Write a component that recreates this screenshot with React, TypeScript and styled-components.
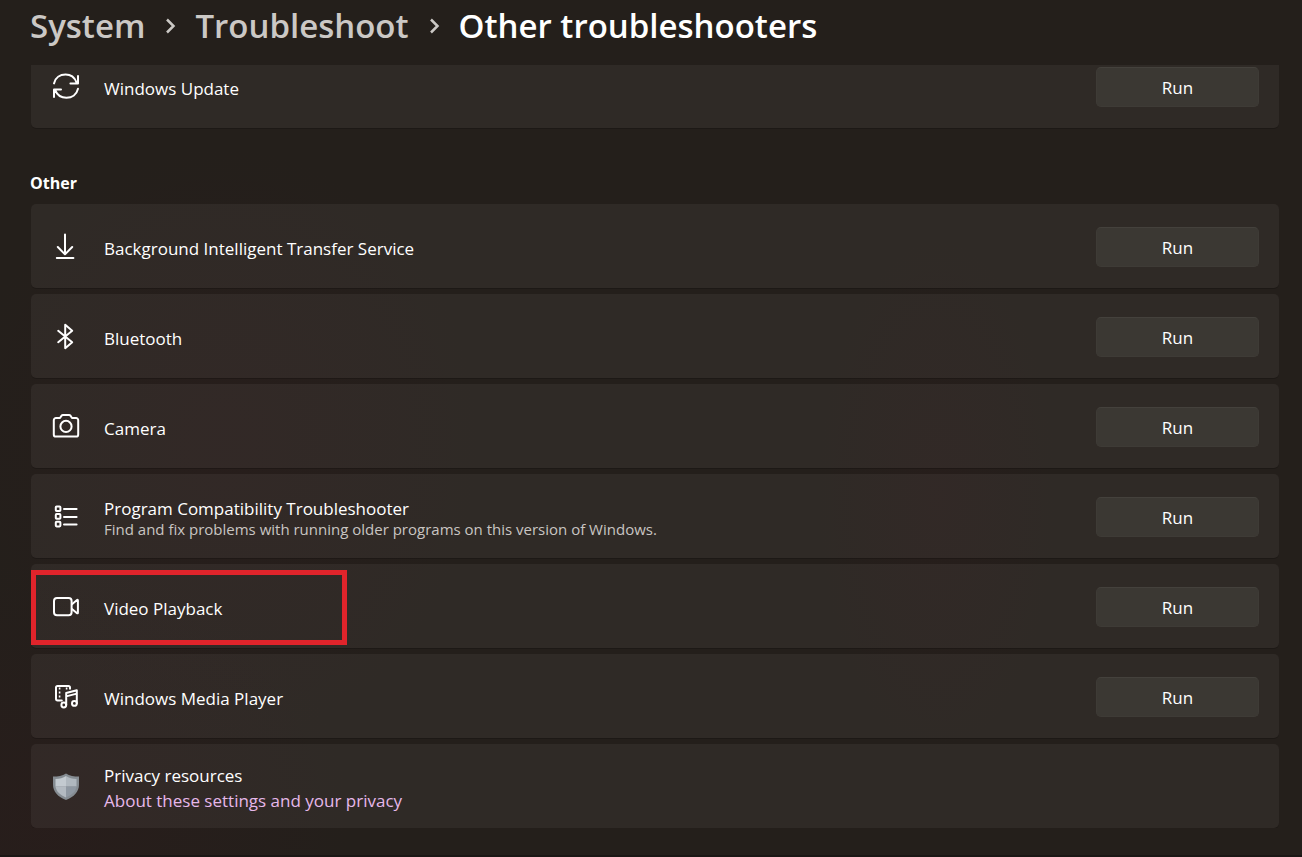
import React from "react";
import styled, { createGlobalStyle } from "styled-components";

const GlobalStyle = createGlobalStyle`
  * { box-sizing: border-box; }
  html { height: 100%; }
  body {
    height: 100%;
    margin: 0;
    color: #ffffff;
    font-family: "Open Sans", "Noto Sans", sans-serif;
    font-size: 17px;
    background: #241f1b;
  }
  #root { height: 100%; }
`;

const Page = styled.div`
  min-height: 100%;
  display: flex;
  flex-direction: column;
  padding: 0 23px 0 30px;
  border-bottom: 2px solid #1b1715;
  background:
    radial-gradient(ellipse 260px 300px at 17% 52%, rgba(60, 22, 30, 0.14), transparent),
    radial-gradient(ellipse 300px 260px at 4% 96%, rgba(60, 22, 30, 0.16), transparent),
    radial-gradient(ellipse 120px 260px at 72% 58%, rgba(60, 22, 30, 0.12), transparent),
    #241f1b;
`;

const Breadcrumb = styled.nav`
  height: 65px;
  flex: none;
`;

const Crumbs = styled.ol`
  display: flex;
  align-items: center;
  height: 52px;
  margin: 0;
  padding: 0;
  list-style: none;
  font-size: 33px;
  line-height: 52px;
  font-weight: 600;
  white-space: nowrap;
`;

const Crumb = styled.li`
  display: flex;
  align-items: center;
`;

const CrumbLink = styled.a`
  color: #cbc8c5;
  text-decoration: none;
`;

const CrumbTitle = styled.h1`
  margin: 0;
  font: inherit;
`;

const Separator = styled.svg`
  width: 11px;
  height: 16px;
  margin: 0 19px 0 20px;
  fill: none;
  stroke: #cbc8c5;
  stroke-width: 2.5;
`;

const Viewport = styled.main`
  overflow: hidden;
`;

const CardList = styled.ul<{ $scrolled?: boolean }>`
  display: flex;
  flex-direction: column;
  gap: 6px;
  margin: ${(p) => (p.$scrolled ? "-21px 0 0 1px" : "0 0 0 1px")};
  padding: 0;
  list-style: none;
`;

const SectionTitle = styled.h2`
  margin: 43px 0 9px;
  font-size: 16px;
  line-height: 24px;
  font-weight: 700;
`;

const Card = styled.li`
  position: relative;
  display: flex;
  align-items: center;
  min-height: 84px;
  padding: 2px 20px 0;
  border-radius: 5px;
  background: rgba(255, 255, 255, 0.052);
  box-shadow: 0 1px 0 rgba(0, 0, 0, 0.18);
`;

const IconSlot = styled.span`
  display: flex;
  width: 53px;
  flex: none;
  color: #ffffff;
`;

const Icon = styled.svg`
  width: 30px;
  height: 30px;
  fill: none;
  stroke: currentColor;
  stroke-width: 2;
  stroke-linecap: round;
  stroke-linejoin: round;
`;

const Texts = styled.div<{ $noted?: boolean }>`
  flex: 1;
  min-width: 0;
  padding-top: ${(p) => (p.$noted ? "0" : "3px")};
`;

const Label = styled.div`
  line-height: 24px;
`;

const Note = styled.div`
  font-size: 15px;
  line-height: 16px;
  color: #c9c5c2;
`;

const PrivacyLink = styled.a`
  display: inline-block;
  line-height: 26px;
  color: #e6b8ea;
  text-decoration: none;
`;

const RunButton = styled.button`
  width: 163px;
  height: 40px;
  flex: none;
  padding: 0;
  border: 1px solid #3e3b36;
  border-top-color: #44413c;
  border-radius: 5px;
  background: #3b3833;
  color: #ffffff;
  font: inherit;
  cursor: pointer;
`;

const Highlight = styled.span`
  position: absolute;
  top: 6px;
  left: 0;
  width: 316px;
  height: 75px;
  border: 5px solid #e0242b;
  pointer-events: none;
`;

const icons = {
  update: (
    <Icon viewBox="0 0 30 30">
      <path d="M3 11.400C4.300 5.800 9 2.600 14.600 2.600c5 0 9 3 10.900 7.800M27 4v7.400h-7.600M27 16.800c-1.300 5.600-6 9-11.600 9-5 0-9.300-3-11.400-7.800M3 25v-7.400h7" />
    </Icon>
  ),
  download: (
    <Icon viewBox="0 0 30 30">
      <path d="M14 2.600v19.600M6.800 15l7.200 7.400 7.200-7.400M5.800 26h16.600" />
    </Icon>
  ),
  bluetooth: (
    <Icon viewBox="0 0 30 30">
      <path d="M7.200 8.800l14 11.400-7 6V2.800l7 6-14 11.400" />
    </Icon>
  ),
  camera: (
    <Icon viewBox="0 0 30 30">
      <path d="M5 6h4l1.600-2.400a1.600 1.600 0 0 1 1.300-.7h6.200a1.600 1.600 0 0 1 1.300.7L21 6h4a2.200 2.200 0 0 1 2.200 2.200v14.200A2.200 2.200 0 0 1 25 24.600H5a2.200 2.200 0 0 1-2.200-2.200V8.200A2.200 2.200 0 0 1 5 6z" />
      <circle cx="15" cy="14.400" r="5.600" />
    </Icon>
  ),
  list: (
    <Icon viewBox="0 0 30 30">
      <rect x="4.800" y="4.400" width="4.600" height="4.600" rx="0.800" />
      <rect x="4.800" y="12.100" width="4.600" height="4.600" rx="0.800" />
      <rect x="4.800" y="19.800" width="4.600" height="4.600" rx="0.800" />
      <path d="M13 7h12.600M13 15h12.600M13 22.600h12.600" />
    </Icon>
  ),
  video: (
    <Icon viewBox="0 0 30 30">
      <rect x="3" y="6" width="17.600" height="17.200" rx="3" />
      <path d="M21 12.200l5-4.200c.4-.3.900-.1.900.5v12.200c0 .6-.5.800-.9.500L21 17" />
    </Icon>
  ),
  media: (
    <Icon viewBox="0 0 30 30">
      <path d="M10.800 18.400H6.600A1.600 1.600 0 0 1 5 16.800V5.600A1.600 1.600 0 0 1 6.600 4h10.800A1.600 1.600 0 0 1 19 5.600v1.200" />
      <path strokeWidth="1.600" strokeLinecap="butt" strokeDasharray="2 2" d="M8.600 5.600v12M15.600 5.600v4" />
      <path d="M15.200 22.800V11L25.800 8.200v13M15.200 14.400l10.600-2.800" />
      <circle cx="12.800" cy="23" r="2.400" />
      <circle cx="23.400" cy="21.400" r="2.400" />
    </Icon>
  ),
  shield: (
    <Icon viewBox="0 0 30 30">
      <g stroke="none">
        <path fill="#858c92" d="M15 1.400c3.600 2.600 8 3.200 13 3.200v8c0 7.400-5 12.400-13 15.400-8-3-13-8-13-15.400v-8c5 0 9.400-.6 13-3.200z" />
        <path fill="#c3cad0" d="M15 4V14.600H4.500V7c4.200 0 7.600-1 10.500-3z" />
        <path fill="#b0b8bf" d="M15 4c2.900 2 6.300 3 10.500 3v7.600H15z" />
        <path fill="#b3bac1" d="M4.500 14.600H15v11C9.300 23.200 5.200 19.800 4.500 14.600z" />
        <path fill="#8f98a2" d="M25.500 14.600H15v11c5.700-2.400 9.800-5.800 10.500-11z" />
      </g>
    </Icon>
  ),
};

type Item = {
  icon: keyof typeof icons;
  label: string;
  note?: string;
  highlighted?: boolean;
};

const items: Item[] = [
  { icon: "download", label: "Background Intelligent Transfer Service" },
  { icon: "bluetooth", label: "Bluetooth" },
  { icon: "camera", label: "Camera" },
  {
    icon: "list",
    label: "Program Compatibility Troubleshooter",
    note: "Find and fix problems with running older programs on this version of Windows.",
  },
  { icon: "video", label: "Video Playback", highlighted: true },
  { icon: "media", label: "Windows Media Player" },
];

function Troubleshooter({ icon, label, note, highlighted }: Item) {
  const id = `troubleshooter-${icon}`;
  return (
    <Card>
      <IconSlot aria-hidden="true">{icons[icon]}</IconSlot>
      <Texts $noted={Boolean(note)}>
        <Label id={id}>{label}</Label>
        {note && <Note>{note}</Note>}
      </Texts>
      <RunButton type="button" aria-describedby={id}>Run</RunButton>
      {highlighted && <Highlight />}
    </Card>
  );
}

function Chevron() {
  return (
    <Separator viewBox="0 0 11 16" aria-hidden="true">
      <path d="M2 1.500l6.500 6.500L2 14.500" />
    </Separator>
  );
}

export default function App() {
  return (
    <>
      <GlobalStyle />
      <Page>
        <Breadcrumb aria-label="Breadcrumb">
          <Crumbs>
            <Crumb><CrumbLink href="#system">System</CrumbLink><Chevron /></Crumb>
            <Crumb><CrumbLink href="#troubleshoot">Troubleshoot</CrumbLink><Chevron /></Crumb>
            <Crumb aria-current="page"><CrumbTitle>Other troubleshooters</CrumbTitle></Crumb>
          </Crumbs>
        </Breadcrumb>
        <Viewport>
          <CardList $scrolled>
            <Troubleshooter icon="update" label="Windows Update" />
          </CardList>
          <SectionTitle>Other</SectionTitle>
          <CardList>
            {items.map((item) => <Troubleshooter key={item.label} {...item} />)}
            <Card>
              <IconSlot aria-hidden="true">{icons.shield}</IconSlot>
              <Texts>
                <Label>Privacy resources</Label>
                <PrivacyLink href="#privacy">About these settings and your privacy</PrivacyLink>
              </Texts>
            </Card>
          </CardList>
        </Viewport>
      </Page>
    </>
  );
}
